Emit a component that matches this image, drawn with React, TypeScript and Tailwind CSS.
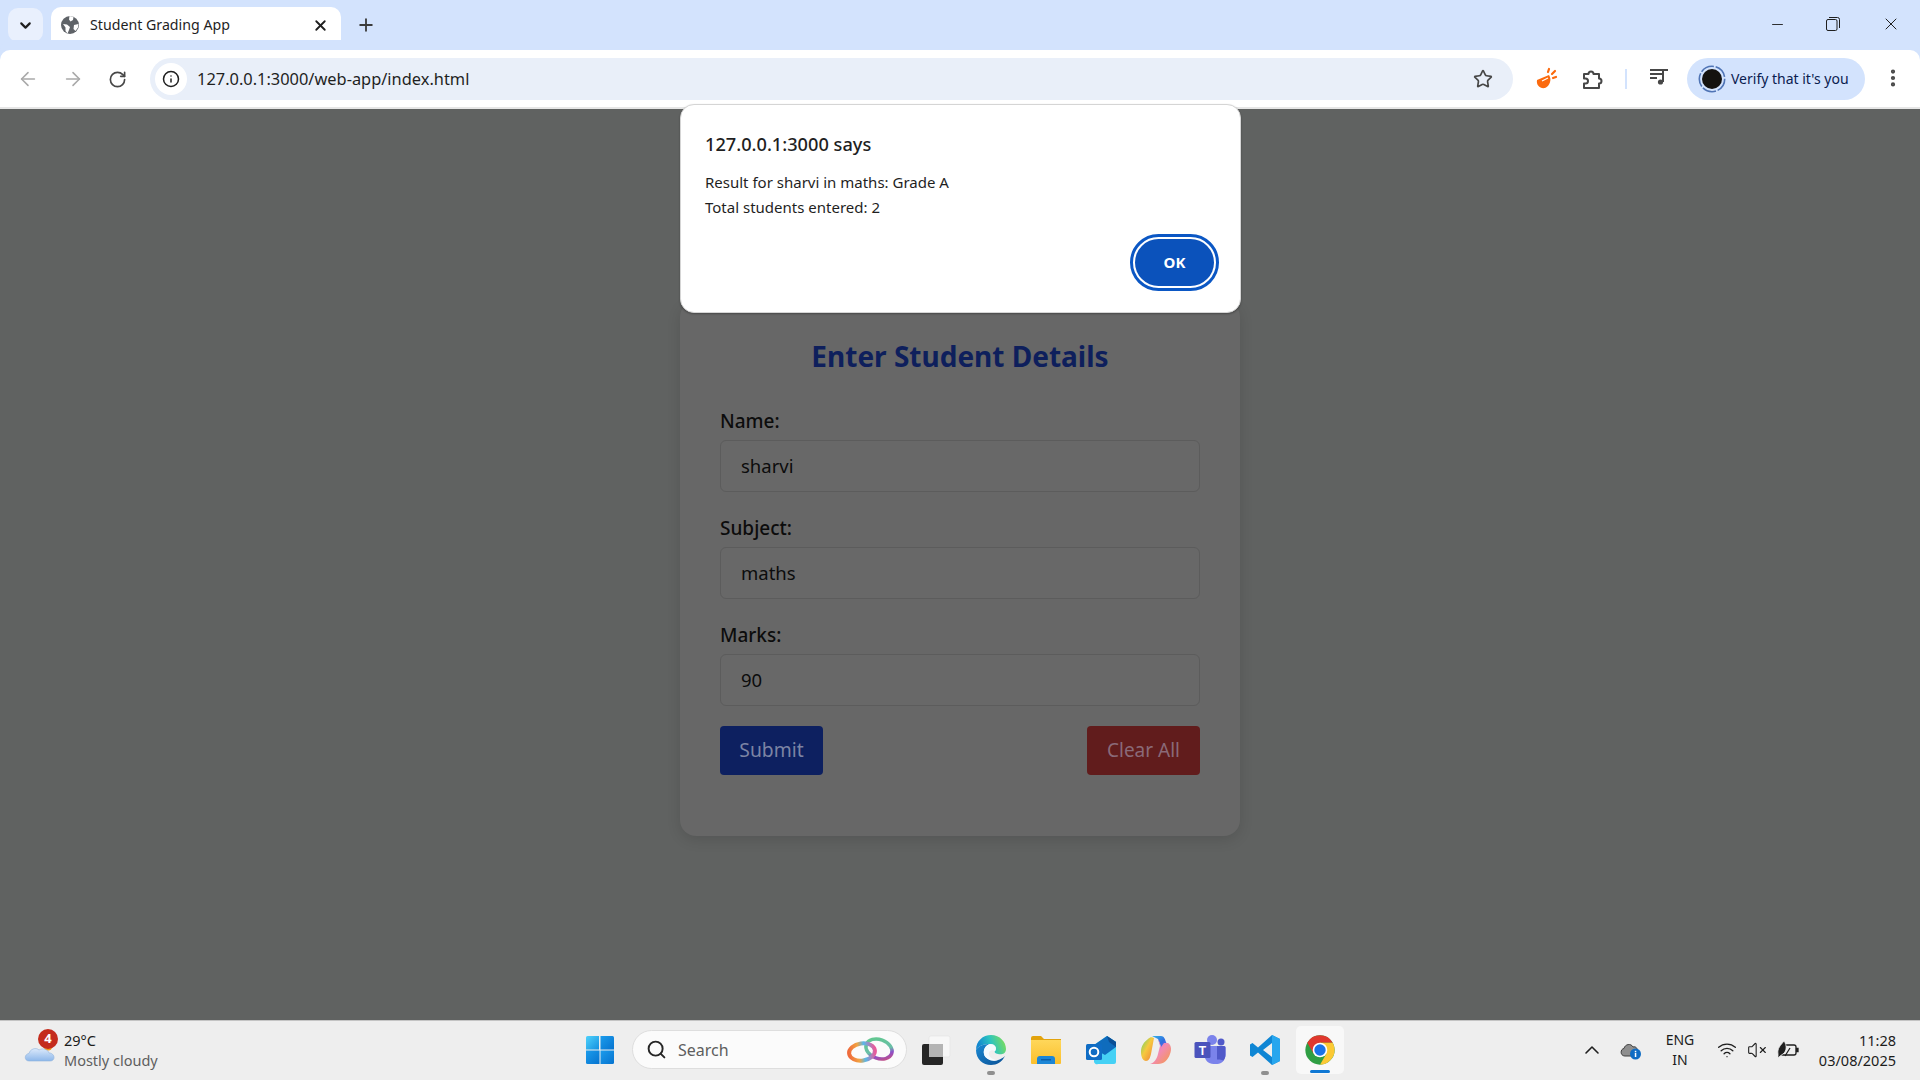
import { ArrowLeft, ArrowRight, ChevronDown, ChevronUp, Info, Minus, MoreVertical, Plus, RotateCw, Search, Star, VolumeX, Wifi, X } from "lucide-react";

const uiFont = "font-['Noto_Sans','Open_Sans',sans-serif]";

const Favicon = () => (
  <svg width="20" height="20" viewBox="0 0 20 20">
    <circle cx="10" cy="10" r="9" fill="#5f6368" />
    <path d="M9.500 1 L13.500 1.800 L13 5 L10.500 6.500 L9 4.500 Z M3 9 L7 9.500 L10 12 L9 15 L7.500 18.500 L5.500 16 L5.500 12.500 Z M14 10 L18.500 9 L18 12.500 L15.500 16 L13.500 14 Z" fill="#fff" />
  </svg>
);

const Puzzle = () => (
  <svg width="24" height="24" viewBox="0 0 24 24" fill="none" stroke="#474747" strokeWidth="2" strokeLinejoin="round">
    <path d="M4 7h4.500a2.500 2.500 0 0 1 5 0H19v4.500a2.500 2.500 0 0 1 0 5V21H4v-4.500h1.500a2.500 2.500 0 0 0 0-5H4z" />
  </svg>
);

const OrangeExt = () => (
  <svg width="24" height="24" viewBox="0 0 24 24">
    <path d="M2 13 L14 8 C17 12 15 19 10 21 C5 22 1 18 2 13Z" fill="#fb6a0e" />
    <path d="M7 14 L13 11" stroke="#fff" strokeWidth="1.200" />
    <path d="M13 5l1-3M17 7l3-3M18 11l3-1" stroke="#fb6a0e" strokeWidth="2.200" strokeLinecap="round" />
  </svg>
);

const MediaIcon = () => (
  <svg width="22" height="22" viewBox="0 0 22 22" fill="none" stroke="#474747" strokeWidth="2">
    <path d="M2 4h12M2 8h12M2 12h7" />
    <path d="M15 16V4h5" />
    <circle cx="12.500" cy="16" r="2.600" fill="#474747" stroke="none" />
  </svg>
);

const Avatar = () => (
  <svg width="28" height="28" viewBox="0 0 28 28">
    <circle cx="14" cy="14" r="12.700" fill="none" stroke="#4f74b5" strokeWidth="1.600" strokeDasharray="14 1.800" />
    <circle cx="14" cy="14" r="10" fill="#14120f" />
  </svg>
);

const RestoreIcon = () => (
  <svg width="14" height="14" viewBox="0 0 14 14" fill="none" stroke="#1f1f1f" strokeWidth="1">
    <rect x="0.500" y="2.500" width="10.500" height="11" rx="1.500" />
    <path d="M3 0.500h8.500a2 2 0 0 1 2 2V11" />
  </svg>
);

const CloudSun = () => (
  <svg width="32" height="30" viewBox="0 0 32 30">
    <defs>
      <linearGradient id="cloudFill" x1="0" y1="0" x2="0" y2="1">
        <stop offset="0" stopColor="#dbe9fb" />
        <stop offset="1" stopColor="#8db7ea" />
      </linearGradient>
    </defs>
    <circle cx="24" cy="11" r="4.500" fill="#f39a1d" />
    <path d="M5 26 C0 26 0 19 5 18.500 C6 14 12 12 15 15 C19 12.500 24 14.500 25 18 C31 18 32 26 26 26Z" fill="url(#cloudFill)" stroke="#8fb1dc" strokeWidth="0.600" />
  </svg>
);

const WinLogo = () => (
  <svg width="30" height="30" viewBox="0 0 30 30">
    <defs>
      <linearGradient id="winA" x1="0" y1="0" x2="1" y2="1">
        <stop offset="0" stopColor="#4fd2fb" />
        <stop offset="1" stopColor="#1490e0" />
      </linearGradient>
      <linearGradient id="winB" x1="0" y1="0" x2="1" y2="1">
        <stop offset="0" stopColor="#1c9cec" />
        <stop offset="1" stopColor="#0673cf" />
      </linearGradient>
    </defs>
    <path d="M1 2.500A1.500 1.500 0 0 1 2.500 1H14v13.500H1z" fill="url(#winA)" />
    <path d="M15.500 1h12A1.500 1.500 0 0 1 29 2.500v12H15.500z" fill="url(#winB)" />
    <path d="M1 15.500h13.500V29H2.500A1.500 1.500 0 0 1 1 27.500z" fill="url(#winB)" />
    <path d="M15.500 15.500H29v12a1.500 1.500 0 0 1-1.500 1.500h-12z" fill="url(#winB)" />
  </svg>
);

const Rings = () => (
  <svg width="50" height="28" viewBox="0 0 50 28" fill="none">
    <defs>
      <linearGradient id="ringA" x1="0" y1="0" x2="1" y2="0">
        <stop offset="0" stopColor="#ef6b3c" />
        <stop offset="0.350" stopColor="#f2a341" />
        <stop offset="0.600" stopColor="#58b8e8" />
        <stop offset="1" stopColor="#e85a9a" />
      </linearGradient>
      <linearGradient id="ringB" x1="0" y1="0" x2="1" y2="1">
        <stop offset="0" stopColor="#5fc98a" />
        <stop offset="0.550" stopColor="#6bbfa8" />
        <stop offset="0.700" stopColor="#8c4fc9" />
        <stop offset="1" stopColor="#d8506a" />
      </linearGradient>
    </defs>
    <ellipse cx="33" cy="13" rx="13.500" ry="9.500" stroke="url(#ringB)" strokeWidth="3.500" transform="rotate(20 33 13)" />
    <ellipse cx="16" cy="16" rx="13" ry="8.500" stroke="url(#ringA)" strokeWidth="4" transform="rotate(-8 16 16)" />
  </svg>
);

const TaskView = () => (
  <svg width="32" height="32" viewBox="0 0 32 32">
    <rect x="9" y="2" width="21" height="21" rx="2" fill="#f7f7f7" stroke="#e2e2e2" strokeWidth="0.600" />
    <rect x="2" y="10" width="21" height="21" rx="2" fill="#262626" />
    <rect x="9" y="10" width="14" height="13" fill="#b4b4b4" />
  </svg>
);

const EdgeIcon = () => (
  <svg width="32" height="32" viewBox="0 0 32 32">
    <defs>
      <linearGradient id="edgeA" x1="0.900" y1="0.300" x2="0.100" y2="0.500">
        <stop offset="0" stopColor="#6fd96a" />
        <stop offset="0.500" stopColor="#2cc4c0" />
        <stop offset="1" stopColor="#1489d0" />
      </linearGradient>
      <linearGradient id="edgeB" x1="0" y1="0" x2="1" y2="1">
        <stop offset="0" stopColor="#1a8ad4" />
        <stop offset="1" stopColor="#0a4f94" />
      </linearGradient>
    </defs>
    <path d="M1 16 C1 7 8 1 16 1 C25 1 31 8 31 15 C31 20 26 21 23 20 C20 19.500 19 18 20 17 C22 15 21 10 15 10 C9 10 3 12 1 16Z" fill="url(#edgeA)" />
    <path d="M1 16 C3 12 9 10 15 10 C11 11 8 15 9 20 C10 25 17 28 23 26 C25 25.500 28 24 30 22 C27 28 22 31 16 31 C8 31 1 25 1 16Z" fill="url(#edgeB)" />
    <path d="M15 10 C21 10 22 15 20 17 C17 15 13 17 14 21 C15 24 19 26 23 26 C17 28 10 25 9 20 C8 15 11 11 15 10Z" fill="#f4fbff" />
  </svg>
);

const FolderIcon = () => (
  <svg width="32" height="30" viewBox="0 0 32 30">
    <defs>
      <linearGradient id="folderA" x1="0" y1="0" x2="0" y2="1">
        <stop offset="0" stopColor="#ffd75a" />
        <stop offset="1" stopColor="#fbbf2c" />
      </linearGradient>
    </defs>
    <path d="M1 3a2 2 0 0 1 2-2h8l3 3H31v6H1z" fill="#e2a30d" />
    <path d="M1 5h30v23a1 1 0 0 1-1 1H2a1 1 0 0 1-1-1z" fill="url(#folderA)" />
    <path d="M7 29v-5a3 3 0 0 1 3-3h12a3 3 0 0 1 3 3v5z" fill="#1c86d6" />
    <rect x="11" y="24" width="10" height="1.500" fill="#0d5ea8" />
  </svg>
);

const OutlookIcon = () => (
  <svg width="32" height="30" viewBox="0 0 32 30">
    <path d="M9 10 L22 1 L31 7 V27 a2 2 0 0 1-2 2H13a3 3 0 0 1-4-2z" fill="#45d1f5" />
    <path d="M9 10 L22 1 L31 7 V12 L20 20 L9 14z" fill="#0f6cbd" />
    <path d="M22 1 L31 7 V12 L24 7z" fill="#0b4f96" />
    <rect x="1" y="9" width="16" height="16" rx="1.500" fill="#0f6cc4" />
    <circle cx="9" cy="17" r="4.300" fill="none" stroke="#fff" strokeWidth="2" />
  </svg>
);

const CopilotIcon = () => (
  <svg width="32" height="32" viewBox="0 0 32 32">
    <defs>
      <linearGradient id="copA" x1="0" y1="0" x2="1" y2="1">
        <stop offset="0" stopColor="#36b6e8" />
        <stop offset="0.500" stopColor="#2f6fe0" />
        <stop offset="1" stopColor="#8b5fe6" />
      </linearGradient>
      <linearGradient id="copB" x1="0" y1="0" x2="1" y2="1">
        <stop offset="0" stopColor="#5fd66a" />
        <stop offset="0.450" stopColor="#f6c93e" />
        <stop offset="1" stopColor="#ef7d3a" />
      </linearGradient>
      <linearGradient id="copC" x1="0" y1="0" x2="1" y2="1">
        <stop offset="0" stopColor="#c26ae6" />
        <stop offset="0.500" stopColor="#f28ab0" />
        <stop offset="1" stopColor="#f49a45" />
      </linearGradient>
    </defs>
    <path d="M12 2 H21 C24 2 25 5 26 8 L29 16 L21 13 L18 5 Z" fill="url(#copA)" />
    <path d="M8 5 C10 3 12 3 14 4 L11 20 C10 24 9 27 6 27 C3 27 1 23 1 18 C1 12 4 8 8 5Z" fill="url(#copB)" />
    <path d="M18 5 C20 8 21 13 21 13 L24 9 H28 C31 11 32 15 30 20 C28 26 24 30 18 30 H10 C14 29 17 25 18 20 L20 12 Z" fill="url(#copC)" />
  </svg>
);

const TeamsIcon = () => (
  <svg width="32" height="30" viewBox="0 0 32 30">
    <circle cx="18" cy="5" r="5" fill="#7b83eb" />
    <circle cx="27" cy="7" r="3.500" fill="#5059c9" />
    <path d="M10 11H30a1.500 1.500 0 0 1 1.500 1.500V20c0 5-4 9-8 9h-4c-5 0-9-4-9-9z" fill="#7b83eb" />
    <path d="M23 11h7a1.500 1.500 0 0 1 1.500 1.500V20c0 2-1 4-2 5.500-2-1-6.500-1-6.500-1z" fill="#5059c9" />
    <rect x="0.500" y="7" width="16" height="16" rx="1.500" fill="#4b53bc" />
    <text x="8.500" y="19.500" textAnchor="middle" fontSize="12" fontWeight="700" fill="#fff" fontFamily="Liberation Sans, sans-serif">T</text>
  </svg>
);

const VsCodeIcon = () => (
  <svg width="32" height="32" viewBox="0 0 32 32">
    <path d="M23 1 L31 5 V27 L23 31 L9 18.500 L3.500 23 L1 21.500 V10.500 L3.500 9 L9 13.500Z M23 9 L14 16 L23 23Z" fill="#0f86d4" fillRule="evenodd" />
    <path d="M23 1 L31 5 V27 L23 31Z" fill="#27a6ee" />
  </svg>
);

const ChromeIcon = () => (
  <svg width="32" height="32" viewBox="0 0 48 48">
    <circle cx="24" cy="24" r="22" fill="#2f9e44" />
    <path d="M24 2A22 22 0 0 1 43.050 13H24L14.470 29.500 4.950 13A22 22 0 0 1 24 2Z" fill="#e0382e" />
    <path d="M43.050 13A22 22 0 0 1 24 46L33.530 29.500 24 13Z" fill="#fcc934" />
    <circle cx="24" cy="24" r="11" fill="#fff" />
    <circle cx="24" cy="24" r="8.500" fill="#1a73e8" />
  </svg>
);

const OneDriveInfo = () => (
  <svg width="22" height="22" viewBox="0 0 22 22">
    <path d="M5 17 C0 17 0 10 4 9.500 C5 5 11 4 13 8 C16 7 18 10 17 12 L14 17Z" fill="#8e8e8e" stroke="#3f3f3f" strokeWidth="1" />
    <circle cx="15.500" cy="15" r="5.500" fill="#0f6cc4" />
    <rect x="14.800" y="14" width="1.500" height="4" fill="#fff" />
    <rect x="14.800" y="11.800" width="1.500" height="1.500" fill="#fff" />
  </svg>
);

const BatteryLeaf = () => (
  <svg width="24" height="22" viewBox="0 0 24 22" fill="none" stroke="#1f1f1f" strokeWidth="1.300">
    <rect x="5" y="6" width="15" height="10" rx="2" />
    <path d="M20.500 9.500h1.500v3h-1.500z" fill="#1f1f1f" />
    <path d="M2 15 C1 9 5 6 8 2 C11 6 11 12 7 15 C5 16 3 18 2 19Z" fill="#1f1f1f" stroke="#eeeeee" strokeWidth="0.800" />
    <path d="M9 17 L14 9" stroke="#1f1f1f" />
  </svg>
);

const Field = ({ label, value }: { label: string; value: string }) => (
  <div className="mb-[23px]">
    <label className="mb-[6px] block text-[19px] font-medium leading-[26px] text-[#0c0c0c]">{label}</label>
    <div className="flex h-[52px] items-center rounded-[6px] border border-[#5c5c5c] bg-[#686868] pl-[20px] text-[18.5px] text-[#0c0c0c]">{value}</div>
  </div>
);

const App = () => {
  return (
    <div className={`relative flex h-[1080px] w-[1920px] flex-col overflow-hidden bg-[#606261] ${uiFont}`}>
      {/* tab strip */}
      <div className="flex h-[50px] shrink-0 items-end bg-[#d3e3fd]">
        <div className="mb-[8px] ml-[8px] flex h-[34px] w-[35px] items-center justify-center rounded-[10px] bg-[#e9f0fd]">
          <ChevronDown size={17} strokeWidth={3} color="#1f1f1f" />
        </div>
        <div className="ml-[8px] flex h-[43px] w-[290px] items-center rounded-t-[10px] bg-white pb-[7px] pl-[9px] pr-[12px]">
          <Favicon />
          <span className="ml-[10px] flex-1 text-[14.200px] text-[#1f1f1f]">Student Grading App</span>
          <X size={17} strokeWidth={2.600} color="#1f1f1f" />
        </div>
        <div className="mb-[15px] ml-[15px]">
          <Plus size={20} strokeWidth={2.200} color="#3c3c3c" />
        </div>
        <div className="mb-[16px] ml-auto flex items-center">
          <Minus size={17} strokeWidth={1.300} color="#1f1f1f" />
          <div className="ml-[40px]"><RestoreIcon /></div>
          <div className="ml-[41px] mr-[19px]"><X size={20} strokeWidth={1.200} color="#1f1f1f" /></div>
        </div>
      </div>

      {/* toolbar */}
      <div className="flex h-[59px] shrink-0 items-start rounded-t-[10px] border-b-2 border-[#e6e6e6] bg-white pt-[8px] [box-shadow:0_-10px_0_#d3e3fd]">
        <div className="ml-[17px] mt-[10px] flex items-center">
          <ArrowLeft size={22} strokeWidth={1.700} color="#a9a9a9" />
          <div className="ml-[23px]"><ArrowRight size={22} strokeWidth={1.700} color="#a9a9a9" /></div>
          <div className="ml-[24px]"><RotateCw size={19} strokeWidth={2.100} color="#474747" /></div>
        </div>
        <div className="ml-[23px] flex h-[42px] w-[1363px] items-center rounded-full bg-[#e9eff9] pl-[5px] pr-[20px]">
          <div className="flex h-[32px] w-[32px] items-center justify-center rounded-full bg-white">
            <Info size={18} strokeWidth={2} color="#1f1f1f" />
          </div>
          <span className="ml-[10px] flex-1 text-[16.400px] text-[#1f1f1f]">127.0.0.1:3000/web-app/index.html</span>
          <Star size={20} strokeWidth={2} color="#474747" />
        </div>
        <div className="ml-[22px] mt-[9px]"><OrangeExt /></div>
        <div className="ml-[21px] mt-[9px]"><Puzzle /></div>
        <div className="ml-[21px] mt-[11px] h-[20px] w-[2px] bg-[#d3e3fd]" />
        <div className="ml-[21px] mt-[8px]"><MediaIcon /></div>
        <div className="ml-[17px] flex h-[42px] w-[178px] items-center rounded-full bg-[#d3e3fd] pb-[1px] pl-[11px]">
          <Avatar />
          <span className="ml-[5px] text-[14px] text-[#0a2050]">Verify that it's you</span>
        </div>
        <div className="ml-[17px] mt-[9px]"><MoreVertical size={22} strokeWidth={2.600} color="#474747" /></div>
      </div>

      {/* page */}
      <main className="flex-1">
        <div className="mx-auto mt-[192px] w-[560px] rounded-[16px] bg-[#676767] px-[40px] pb-[61px] pt-[35px] shadow-[0_4px_14px_rgba(0,0,0,0.12)]">
          <h1 className="mb-[32px] text-center text-[28px] font-bold leading-[40px] text-[#0e1f5c]">Enter Student Details</h1>
          <Field label="Name:" value="sharvi" />
          <Field label="Subject:" value="maths" />
          <Field label="Marks:" value="90" />
          <div className="-mt-[3px] flex justify-between">
            <div className="flex h-[49px] w-[103px] items-center justify-center rounded-[4px] bg-[#0d2060] text-[19.300px] text-[#7c84a4]">Submit</div>
            <div className="flex h-[49px] w-[113px] items-center justify-center rounded-[4px] bg-[#611c1c] text-[19px] text-[#8a6a78]">Clear All</div>
          </div>
        </div>
      </main>

      {/* alert dialog */}
      <div className="absolute left-[680px] top-[104px] h-[209px] w-[561px] rounded-[14px] border border-[#d5d5d5] bg-white pl-[24px] pr-[21px] pt-[25px] shadow-[0_1px_2px_rgba(0,0,0,0.3)]">
        <div className="text-[18.200px] font-medium leading-[28px] text-[#1f1f1f]">127.0.0.1:3000 says</div>
        <div className="mt-[12px] text-[15px] leading-[25px] text-[#1f1f1f]">
          <div>Result for sharvi in maths: Grade A</div>
          <div>Total students entered: 2</div>
        </div>
        <div className="mt-[14px] flex justify-end">
          <div className="flex h-[57px] w-[89px] items-center justify-center rounded-full border-[3px] border-[#0b57c4] p-[2px]">
            <div className="flex h-full w-full items-center justify-center rounded-full bg-[#0b52bb] text-[15px] font-bold text-white">OK</div>
          </div>
        </div>
      </div>

      {/* taskbar */}
      <footer className="flex h-[60px] shrink-0 items-center border-t border-[#c4c4c4] bg-[#eeeeee] pb-[2px]">
        <div className="relative ml-[24px] flex w-[561px] items-center">
          <CloudSun />
          <span className="absolute left-[14px] top-[-1px] flex h-[20px] w-[20px] items-center justify-center rounded-full bg-[#c42b1c] text-[13px] font-bold text-white">4</span>
          <div className="ml-[8px] text-[14.500px] leading-[20px]">
            <div className="text-[#1c1c1c]">29°C</div>
            <div className="text-[#5e5e5e]">Mostly cloudy</div>
          </div>
        </div>
        <WinLogo />
        <div className="ml-[17px] flex h-[39px] w-[275px] items-center rounded-full border border-[#dedede] bg-[#fbfbfb] pl-[13px] pr-[10px]">
          <Search size={21} strokeWidth={2.200} color="#262626" />
          <span className="ml-[11px] flex-1 text-[16px] text-[#5e5e5e]">Search</span>
          <Rings />
        </div>
        <div className="ml-[13px]"><TaskView /></div>
        <div className="relative ml-[23px]">
          <EdgeIcon />
          <span className="absolute bottom-[-9px] left-[12px] h-[4px] w-[8px] rounded-full bg-[#8f8f8f]" />
        </div>
        <div className="ml-[23px]"><FolderIcon /></div>
        <div className="ml-[23px]"><OutlookIcon /></div>
        <div className="ml-[23px]"><CopilotIcon /></div>
        <div className="ml-[22px]"><TeamsIcon /></div>
        <div className="relative ml-[23px]">
          <VsCodeIcon />
          <span className="absolute bottom-[-9px] left-[12px] h-[4px] w-[8px] rounded-full bg-[#8f8f8f]" />
        </div>
        <div className="relative ml-[15px] flex h-[48px] w-[48px] items-center justify-center rounded-[5px] bg-[#f8f8f8]">
          <ChromeIcon />
          <span className="absolute bottom-[1px] left-[14px] h-[3px] w-[20px] rounded-full bg-[#0f78d4]" />
        </div>
        <div className="ml-[236px]"><ChevronUp size={24} strokeWidth={1.600} color="#1f1f1f" /></div>
        <div className="ml-[16px]"><OneDriveInfo /></div>
        <div className="ml-[21px] w-[34px] text-center text-[14px] leading-[20px] text-[#1c1c1c]">
          <div>ENG</div>
          <div>IN</div>
        </div>
        <div className="ml-[20px]"><Wifi size={20} strokeWidth={1.600} color="#1f1f1f" /></div>
        <div className="ml-[10px]"><VolumeX size={20} strokeWidth={1.300} color="#1f1f1f" /></div>
        <div className="ml-[9px]"><BatteryLeaf /></div>
        <div className="ml-auto mr-[24px] text-right text-[14.500px] leading-[20px] text-[#1c1c1c]">
          <div>11:28</div>
          <div>03/08/2025</div>
        </div>
      </footer>
    </div>
  );
};

export default App;
